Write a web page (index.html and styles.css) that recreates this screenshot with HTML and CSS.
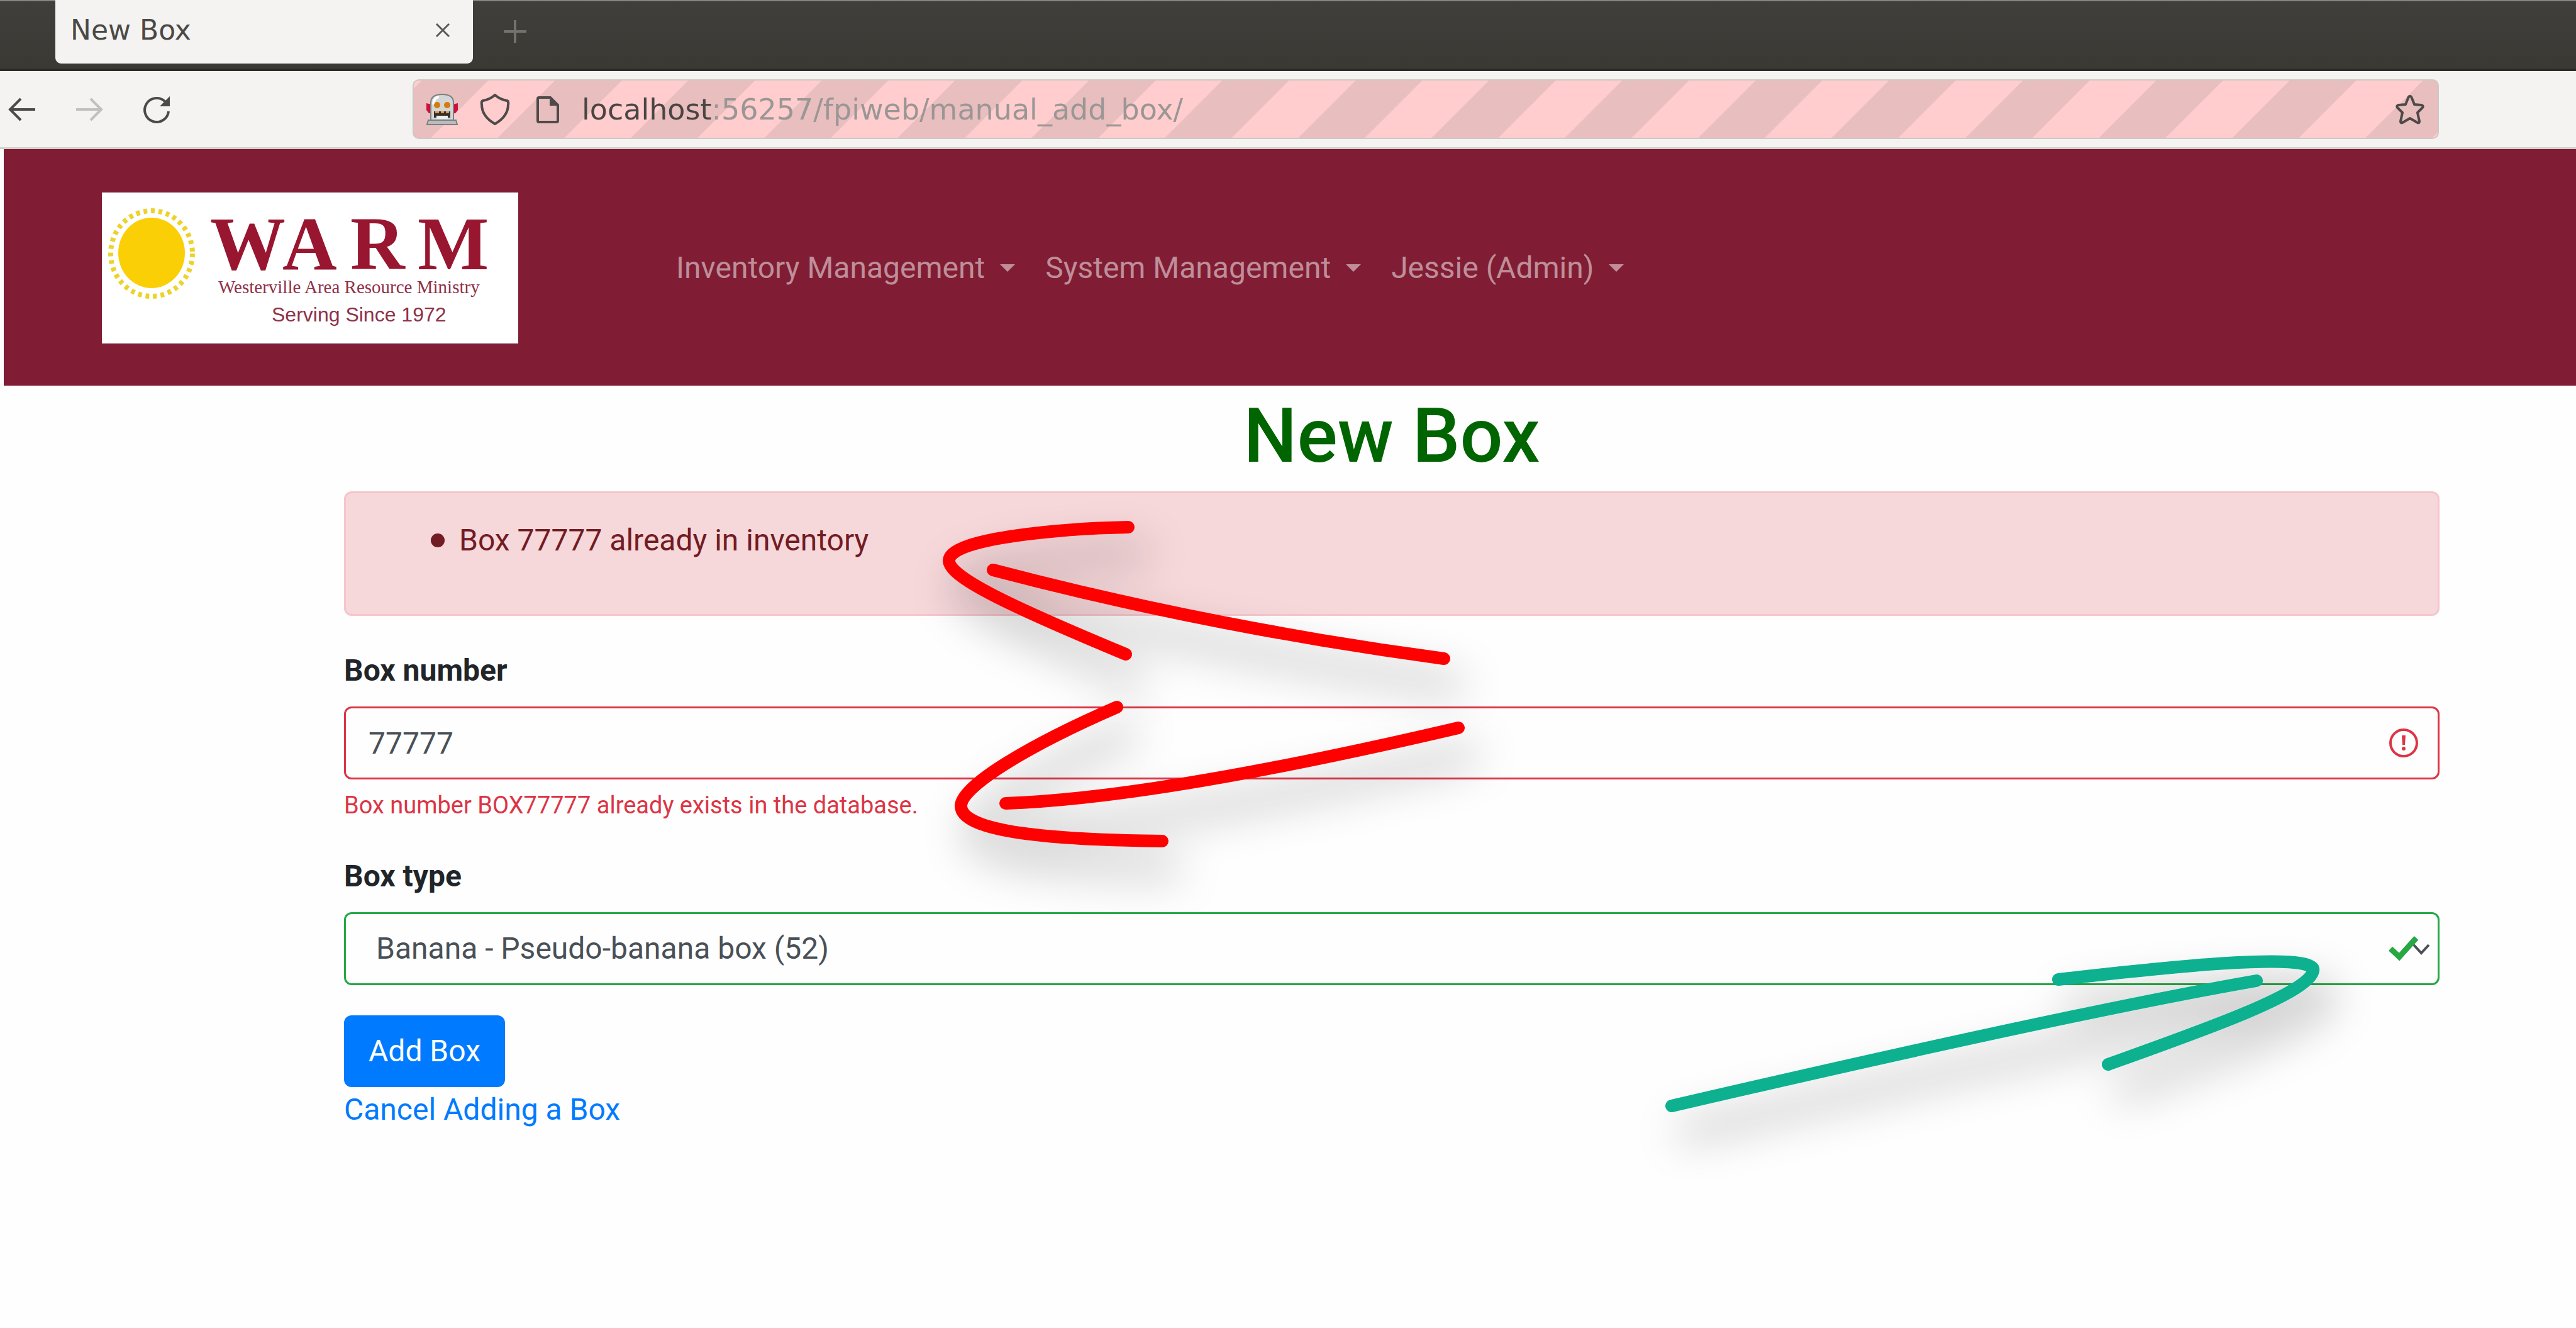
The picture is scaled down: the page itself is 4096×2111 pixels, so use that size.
FILE: index.html
```html
<!DOCTYPE html>
<html lang="en">
<head>
<meta charset="utf-8">
<title>New Box</title>
<link rel="stylesheet" href="styles.css">
</head>
<body>
<div class="tab-strip">
  <div class="tab">
    <span class="tab-title">New Box</span>
    <button class="tab-close" type="button" aria-label="Close tab">
      <svg viewBox="0 0 24 24"><path d="M2 2L22 22M22 2L2 22" fill="none" stroke="#5a5956" stroke-width="3"/></svg>
    </button>
  </div>
  <button class="new-tab" type="button" aria-label="New tab">
    <svg viewBox="0 0 36 36"><path d="M18 0V36M0 18H36" fill="none" stroke="#74726c" stroke-width="4"/></svg>
  </button>
</div>

<div class="toolbar">
  <div class="history">
    <button type="button" aria-label="Back"><svg viewBox="0 0 44 44"><path d="M20 5L3 22L20 39M3 22H43" fill="none" stroke="#4b4a47" stroke-width="4"/></svg></button>
    <button type="button" aria-label="Forward"><svg viewBox="0 0 44 44"><path d="M24 5L41 22L24 39M41 22H1" fill="none" stroke="#c1c0bd" stroke-width="4"/></svg></button>
    <button type="button" aria-label="Reload"><svg viewBox="0 0 44 44"><path d="M36 10A19 19 0 1 0 41 25" fill="none" stroke="#4b4a47" stroke-width="4"/><path d="M43 1V17H27Z" fill="#4b4a47"/></svg></button>
  </div>
  <div class="url-bar">
    <div class="url-icons">
      <svg viewBox="0 0 50 50">
        <path d="M0 15L8 17V31H4L0 26ZM50 15L42 17V31H46L50 26Z" fill="#d0103a"/>
        <path d="M7 42V14Q7 1 25 1T43 14V42Z" fill="#d3d6d6" stroke="#7d8080" stroke-width="2"/>
        <path d="M11 17Q12 6 20 5" fill="none" stroke="#ffffff" stroke-width="4"/>
        <circle cx="17" cy="18" r="5" fill="#d87a10"/><circle cx="33" cy="18" r="5" fill="#d87a10"/>
        <path d="M12 28H38V38H12Z" fill="#33322f"/>
        <path d="M14 28H20V31H14ZM23 28H28V31H23ZM31 28H36V31H31Z" fill="#f0922b"/>
        <path d="M16 35H34V40H16Z" fill="#eceeee"/>
        <path d="M3 42H47L49 49H1Z" fill="#b9bcbc" stroke="#7d8080" stroke-width="2"/>
      </svg>
      <svg viewBox="0 0 50 50"><path d="M25 2Q33 9 44 11Q47 12 46 17Q46 36 25 48Q4 36 4 17Q3 12 6 11Q17 9 25 2Z" fill="none" stroke="#4f4a4a" stroke-width="4" stroke-linejoin="round"/></svg>
      <svg viewBox="0 0 50 50"><path d="M11 6H29L41 18V43Q41 45 39 45H11Q9 45 9 43V8Q9 6 11 6Z" fill="none" stroke="#4f4a4a" stroke-width="4"/><path d="M28 5V19H42Z" fill="#4f4a4a"/></svg>
    </div>
    <input class="url" type="text" aria-label="Address" value="localhost:56257/fpiweb/manual_add_box/">
    <button class="star" type="button" aria-label="Bookmark this page"><svg viewBox="0 0 48 48"><path d="M24 3Q26 3 27 6L31 16L42 17Q46 18 44 21L36 29L39 43Q39 46 36 45L24 38L12 45Q9 46 9 43L12 29L4 21Q2 18 6 17L17 16L21 6Q22 3 24 3Z" fill="none" stroke="#4f4a4a" stroke-width="4" stroke-linejoin="round"/></svg></button>
  </div>
</div>

<nav class="navbar">
  <a class="brand" href="#" aria-label="WARM home">
    <svg class="logo" viewBox="0 0 662 240">
      <rect width="662" height="240" fill="#fff"/>
      <ellipse cx="79" cy="97" rx="65" ry="68" fill="none" stroke="#ecd32c" stroke-width="8" stroke-dasharray="6 6"/>
      <ellipse cx="79" cy="96" rx="53" ry="56" fill="#fbcf05"/>
      <text class="logo-name" x="172 287 395 502" y="122">WARM</text>
      <text class="logo-full" x="185" y="160">Westerville Area Resource Ministry</text>
      <text class="logo-since" x="270" y="205">Serving Since 1972</text>
    </svg>
  </a>
  <ul class="nav-links">
    <li><a href="#">Inventory Management</a></li>
    <li><a href="#">System Management</a></li>
    <li><a href="#">Jessie (Admin)</a></li>
  </ul>
</nav>

<main class="content">
  <h1>New Box</h1>
  <div class="alert" role="alert">
    <ul><li>Box 77777 already in inventory</li></ul>
  </div>
  <form>
    <div class="group">
      <label for="number">Box number</label>
      <div class="field">
        <input class="control invalid" id="number" type="text" value="77777" aria-describedby="number-error">
        <svg class="field-icon" viewBox="0 0 48 48"><circle cx="24" cy="24" r="21" fill="none" stroke="#dc3545" stroke-width="4"/><path d="M21 12H27L26 27H22Z" fill="#dc3545"/><circle cx="24" cy="33" r="3" fill="#dc3545"/></svg>
      </div>
      <p class="error" id="number-error">Box number BOX77777 already exists in the database.</p>
    </div>
    <div class="group">
      <label for="type">Box type</label>
      <div class="field">
        <select class="control valid" id="type"><option>Banana - Pseudo-banana box (52)</option></select>
        <svg class="field-icon select-icon" viewBox="0 0 66 48"><path d="M40 18L52 31L64 18" fill="none" stroke="#495057" stroke-width="4"/><path d="M3 24L17 37L44 7" fill="none" stroke="#28a745" stroke-width="9"/></svg>
      </div>
    </div>
    <button class="submit" type="submit">Add Box</button>
  </form>
  <a class="cancel" href="#">Cancel Adding a Box</a>
</main>

<svg class="notes" viewBox="0 0 4096 2111" aria-hidden="true">
  <defs>
    <filter id="shadow" x="-20%" y="-60%" width="140%" height="240%"><feDropShadow dx="20" dy="42" stdDeviation="34" flood-color="#000" flood-opacity="0.35"/></filter>
  </defs>
  <g fill="none" stroke-width="20" stroke-linecap="round" stroke-linejoin="round">
    <g stroke="#f00" filter="url(#shadow)">
      <path d="M1794 838C1700 840 1509 854 1509 891C1509 917 1600 961 1790 1040"/>
      <path d="M1579 906Q1925 997 2296 1047"/>
    </g>
    <g stroke="#f00" filter="url(#shadow)">
      <path d="M1776 1124C1640 1183 1528 1249 1528 1281C1528 1324 1680 1335 1848 1337"/>
      <path d="M1599 1277Q1840 1269 2319 1157"/>
    </g>
    <g stroke="#07b190" filter="url(#shadow)">
      <path d="M3273 1557C3430 1539 3684 1511 3678 1543C3672 1579 3500 1639 3352 1692"/>
      <path d="M2658 1758Q3300 1609 3588 1559"/>
    </g>
  </g>
</svg>
</body>
</html>
```

FILE: styles.css
```css
* {
  box-sizing: border-box;
}

body {
  position: relative;
  margin: 0;
  background: #fefefe;
  color: #212529;
  font: 48px/72px Roboto, "Liberation Sans", sans-serif;
}

button {
  padding: 0;
  border: 0;
  background: none;
  font: inherit;
  cursor: pointer;
}

svg {
  display: block;
}

/* Browser tabs */
.tab-strip {
  display: flex;
  align-items: flex-start;
  height: 113px;
  padding-left: 88px;
  border-bottom: 4px solid #2d2b28;
  background: linear-gradient(#403f3c, #3b3933);
  box-shadow: inset 0 2px #85847f;
}

.tab {
  display: flex;
  align-items: center;
  justify-content: space-between;
  width: 664px;
  height: 101px;
  padding: 0 36px 6px 24px;
  border-radius: 0 0 9px 9px;
  background: #f4f3f1;
}

.tab-title {
  color: #4a4946;
  font: 44px/52px "DejaVu Sans", sans-serif;
}

.tab-close svg {
  width: 24px;
  height: 24px;
}

.new-tab {
  height: 100px;
  margin-left: 49px;
}

.new-tab svg {
  width: 36px;
  height: 36px;
}

/* Browser toolbar */
.toolbar {
  display: flex;
  align-items: center;
  height: 124px;
  padding: 0 218px 0 13px;
  border-bottom: 3px solid #d3d0cb;
  background: #f4f3f1;
}

.history {
  display: flex;
  gap: 63px;
}

.history svg {
  width: 44px;
  height: 44px;
}

.url-bar {
  display: flex;
  flex: 1;
  align-items: center;
  height: 95px;
  margin-left: 385px;
  padding: 0 20px;
  border: 2px solid #cdc8c4;
  border-radius: 10px;
  background: repeating-linear-gradient(-45deg, #ffcdcd 0 6px, #e9bebe 6px 81px, #ffcdcd 81px 150px);
}

.url-icons {
  display: flex;
  gap: 34px;
}

.url-icons svg {
  width: 50px;
  height: 50px;
}

.url {
  flex: 1;
  min-width: 0;
  height: 72px;
  margin-left: 29px;
  padding: 0;
  border: 0;
  background: linear-gradient(90deg, #4a4545 0 207px, #9b9696 207px);
  background-clip: text;
  -webkit-background-clip: text;
  color: transparent;
  font: 46px/72px "DejaVu Sans", sans-serif;
}

.star svg {
  width: 48px;
  height: 48px;
}

/* Site header */
.navbar {
  display: flex;
  align-items: center;
  margin-left: 6px;
  padding: 69px 156px 67px;
  background: #801d34;
}

.logo {
  width: 662px;
  height: 240px;
}

.logo-name {
  fill: #98162f;
  font: bold 120px "Liberation Serif", serif;
}

.logo-full {
  fill: #8f3047;
  font: 29px "Liberation Serif", serif;
}

.logo-since {
  fill: #8f3047;
  font: 32px "Liberation Sans", sans-serif;
}

.nav-links {
  display: flex;
  margin: 0 0 0 227px;
  padding: 0;
  list-style: none;
}

.nav-links a {
  display: flex;
  align-items: center;
  gap: 24px;
  padding: 0 24px;
  color: rgba(255, 255, 255, 0.5);
  text-decoration: none;
}

.nav-links a::after {
  border: 12px solid transparent;
  border-top-color: currentColor;
  border-bottom: 0;
  content: "";
}

/* Form page */
.content {
  padding: 8px 217px 72px 547px;
}

h1 {
  margin: 0 0 16px;
  color: #006400;
  font-size: 120px;
  font-weight: 500;
  line-height: 144px;
  text-align: center;
}

.alert {
  margin-bottom: 51px;
  padding: 39px 60px 81px;
  border: 3px solid #f5c6cb;
  border-radius: 12px;
  background: #f6d7da;
  color: #721c24;
}

.alert ul {
  margin: 0;
  padding: 0 0 0 75px;
  list-style: none;
}

.alert li {
  display: flex;
  align-items: center;
  gap: 23px;
}

.alert li::before {
  width: 22px;
  height: 22px;
  border-radius: 50%;
  background: #721c24;
  content: "";
}

.group {
  margin-bottom: 48px;
}

label {
  display: block;
  margin-bottom: 21px;
  font-weight: 700;
}

.field {
  position: relative;
}

.control {
  display: block;
  width: 100%;
  height: 116px;
  padding: 0 36px;
  border: 3px solid;
  border-radius: 12px;
  background: transparent;
  color: #495057;
  font: inherit;
  appearance: none;
}

.invalid {
  border-color: #dc3545;
}

.valid {
  padding-left: 48px;
  border-color: #28a745;
}

.field-icon {
  position: absolute;
  top: 34px;
  right: 33px;
  width: 48px;
  height: 48px;
}

.select-icon {
  right: 15px;
  width: 66px;
}

.error {
  margin: 12px 0 0;
  color: #dc3545;
  font-size: 38px;
  line-height: 58px;
}

.submit {
  display: block;
  height: 114px;
  padding: 0 39px;
  border-radius: 12px;
  background: #007bff;
  color: #fff;
}

.cancel {
  display: inline-block;
  color: #007bff;
  text-decoration: none;
}

/* Hand-drawn arrows over the page */
.notes {
  position: absolute;
  top: 0;
  left: 0;
  width: 100%;
  pointer-events: none;
}
```
